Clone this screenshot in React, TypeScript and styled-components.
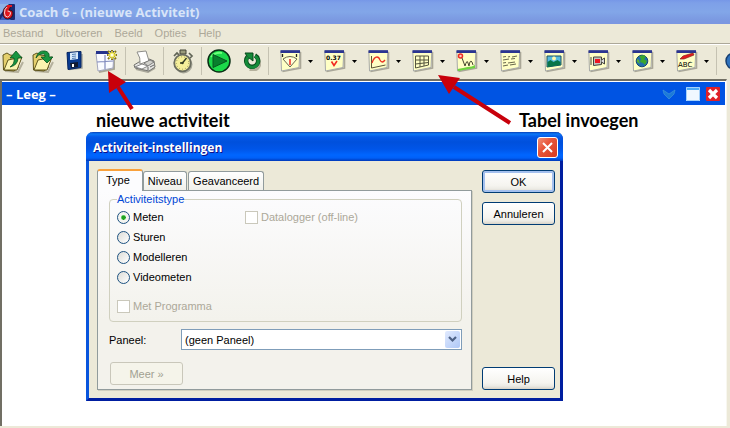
import React, { ReactNode, useState } from "react";
import styled, { createGlobalStyle, css } from "styled-components";

const Global = createGlobalStyle`
  * { box-sizing: border-box; }
  body { margin: 0; background: #ece9d8; font: 11px/14px "Liberation Sans", Arial, sans-serif; color: #000; }
  button, input, select { font: inherit; color: inherit; margin: 0; }
`;

const AppWindow = styled.div`
  position: relative;
  min-height: 100vh;
  display: flex;
  flex-direction: column;
  overflow: hidden;
`;

const TitleBar = styled.header`
  height: 24px;
  display: flex;
  align-items: center;
  gap: 4px;
  color: #d8e4f8;
  font: bold 13px/20px "Open Sans", sans-serif;
  background: linear-gradient(#7697e7 0, #7ea0e8 3px, #82a6e8 12px, #7b99e1 20px, #7b96e1);
  white-space: nowrap;
`;

const MenuBar = styled.nav`
  height: 20px;
  display: flex;
  align-items: center;
  gap: 12px;
  padding: 0 3px 2px;
  border-bottom: 1px solid #aca899;
`;

const MenuItem = styled.button`
  border: 0;
  padding: 0;
  background: none;
  color: #aca899;
`;

const ToolBar = styled.div`
  height: 35px;
  flex: none;
  display: flex;
  align-items: center;
  padding-bottom: 2px;
  border-top: 1px solid #fff;
  overflow: hidden;
`;

const ToolButton = styled.button<{ $w: number }>`
  flex: none;
  width: ${(p) => p.$w}px;
  height: 30px;
  padding: 0;
  border: 0;
  background: none;
  display: flex;
  align-items: center;
  justify-content: center;
`;

const ViewButton = styled.button`
  flex: none;
  width: 44px;
  height: 30px;
  padding: 0 0 0 4px;
  border: 0;
  background: none;
  display: flex;
  align-items: center;
  gap: 6px;
`;

const Divider = styled.span<{ $gap?: number }>`
  flex: none;
  width: 1px;
  height: 28px;
  margin-right: ${(p) => p.$gap ?? 0}px;
  background: #c5c2b2;
`;

const Workspace = styled.main`
  flex: 1;
  display: flex;
  flex-direction: column;
  margin: 0 3px 2px 0;
  border: solid #716f64;
  border-width: 2px 0 0 2px;
  border-right: 1px solid #f8f7f0;
  background: #fff;
`;

const DocumentBar = styled.div`
  height: 23px;
  margin: 1px 1px 0 0;
  padding: 0 5px 0 4px;
  display: flex;
  align-items: center;
  background: #0054e3;
  color: #fff;
  font: bold 13px/20px "Open Sans", sans-serif;
`;

const DocumentTitle = styled.span`
  flex: 1;
`;

const DocumentButton = styled.button<{ $gap: number }>`
  padding: 0;
  border: 0;
  background: none;
  margin-left: ${(p) => p.$gap}px;
  display: flex;
`;

const Note = styled.div<{ $x: number; $y: number }>`
  position: absolute;
  left: ${(p) => p.$x}px;
  top: ${(p) => p.$y}px;
  font: bold 18px/20px Lato, sans-serif;
  white-space: nowrap;
`;

const Pointers = styled.svg`
  position: absolute;
  left: 0;
  top: 0;
  pointer-events: none;
`;

const Dialog = styled.section`
  position: absolute;
  left: 86px;
  right: 167px;
  top: 132px;
  border: solid #0831d9;
  border-width: 0 3px 3px;
  border-color: #0831d9 #001ea0 #001ea0 #0855dd;
  border-radius: 7px 7px 0 0;
  background: #ece9d8;
`;

const DialogTitle = styled.header`
  height: 29px;
  margin: 0 -3px;
  padding: 2px 5px 0 7px;
  display: flex;
  align-items: center;
  justify-content: space-between;
  border-radius: 7px 7px 0 0;
  background: linear-gradient(#0840b8 0, #0c78f8 2px, #0458e8 5px, #0050dc 10px, #0055e8 17px, #0066ff 23px, #0060f8 26px, #0038b8);
  color: #fff;
  font: bold 12px/20px "Open Sans", sans-serif;
  text-shadow: 1px 1px #0f1089;
`;

const CloseButton = styled.button`
  width: 21px;
  height: 21px;
  padding: 0;
  border: 1px solid #fff;
  border-radius: 3px;
  background: linear-gradient(135deg, #f09078, #e8553a 40%, #d83a20);
  display: grid;
  place-items: center;
`;

const DialogBody = styled.div`
  display: flex;
  align-items: stretch;
  gap: 10px;
  padding: 8px 5px 8px 8px;
`;

const TabArea = styled.div`
  flex: 1;
`;

const TabList = styled.div`
  height: 21px;
  display: flex;
  align-items: flex-end;
  position: relative;
  z-index: 1;
`;

const Tab = styled.button<{ $on?: boolean }>`
  height: 19px;
  padding: 0 4px;
  margin-right: 1px;
  border: 1px solid #919b9c;
  border-bottom: 0;
  border-radius: 3px 3px 0 0;
  background: linear-gradient(#fff, #f0f0ea);
  white-space: nowrap;
  ${(p) =>
    p.$on &&
    css`
      height: 22px;
      padding: 0 12px 3px 8px;
      margin: 0 0 -1px;
      border-top: 2px solid #f9a13c;
      background: #fcfcfe;
    `}
`;

const TabPanel = styled.div`
  padding: 2px 9px 4px 11px;
  border: 1px solid #919b9c;
  box-shadow: 1px 1px #d0cebf;
  background: linear-gradient(#fcfcfe, #f3f2ec 65%, #f3f2ec);
`;

const Group = styled.fieldset`
  margin: 0;
  padding: 2px 7px 8px;
  border: 1px solid #d0d0bf;
  border-radius: 4px;
`;

const Legend = styled.legend`
  padding: 0;
  line-height: 12px;
  color: #0046d5;
`;

const Choices = styled.div`
  display: grid;
  grid-template-columns: 128px 1fr;
  grid-auto-rows: 20px;
  align-items: center;
`;

const Choice = styled.label<{ $off?: boolean }>`
  display: flex;
  align-items: center;
  gap: 3px;
  color: ${(p) => (p.$off ? "#aca899" : "#000")};
  white-space: nowrap;
`;

const ChoiceOnly = styled(Choice)`
  grid-column: 1;
`;

const LastChoice = styled(Choice)`
  margin-top: 12px;
`;

const Radio = styled.input`
  appearance: none;
  width: 13px;
  height: 13px;
  border: 1px solid #1c5180;
  border-radius: 50%;
  background: linear-gradient(135deg, #dcdcd7, #fff);
  &:checked {
    background: radial-gradient(circle, #21a121 0 2px, #58c858 2px, #f4f4f0 3px);
  }
`;

const Check = styled.input`
  appearance: none;
  width: 13px;
  height: 13px;
  border: 1px solid #cac8bb;
  background: #fff;
`;

const PanelRow = styled.div`
  display: flex;
  align-items: center;
  margin-top: 7px;
`;

const PanelLabel = styled.label`
  width: 72px;
`;

const SelectBox = styled.div`
  position: relative;
  flex: 1;
  display: flex;
`;

const Select = styled.select`
  appearance: none;
  width: 100%;
  height: 21px;
  padding: 0 20px 0 3px;
  border: 1px solid #7f9db9;
  border-radius: 0;
  background: #fff;
`;

const SelectArrow = styled.span`
  position: absolute;
  right: 2px;
  top: 2px;
  bottom: 2px;
  width: 15px;
  border-radius: 2px;
  background: linear-gradient(135deg, #e1eafe, #aec8f7);
  display: grid;
  place-items: center;
  pointer-events: none;
`;

const PushButton = styled.button<{ $main?: boolean }>`
  width: 73px;
  height: 23px;
  padding: 0;
  border: 1px solid #003c74;
  border-radius: 3px;
  background: linear-gradient(#fff, #f5f4ef 70%, #ecebe5 85%, #d8d3c8);
  box-shadow: ${(p) => (p.$main ? "inset 0 0 0 2px #a4c0ee" : "none")};
  &:disabled {
    border-color: #c9c7ba;
    background: #f5f4ea;
    color: #a1a192;
  }
`;

const MoreRow = styled.div`
  display: flex;
  margin: 12px 0 0 1px;
`;

const Actions = styled.div`
  display: flex;
  flex-direction: column;
  gap: 9px;
  padding-top: 1px;
`;

const Spacer = styled.div`
  flex: 1;
`;

const Logo = () => (
  <svg width="15" height="18" viewBox="0 0 15 18" aria-hidden="true">
    <rect y="1" width="15" height="16" rx="1" fill="#1b2a72" />
    <path d="M0 1h9L0 12z" fill="#8fb2e8" />
    <path d="M0 17l4-6 7 6z" fill="#3b5cb8" />
    <path d="M9 2q-6 2-6 8 0 6 5 6 5-1 5-6 0-3-4-3l2-4z" fill="#d8141c" stroke="#14101c" strokeWidth=".8" />
    <path d="M8 3q-4 3-3.500 7 0 4 3 4 3-1 3-4 0-2-3-2" fill="none" stroke="#f6dcdc" strokeWidth="1" />
    <path d="M7 3h5M8 9v4" stroke="#e9171f" strokeWidth="1.800" />
  </svg>
);

const Folder = ({ children }: { children: ReactNode }) => (
  <svg width="22" height="24" viewBox="0 0 22 24" aria-hidden="true">
    <path d="M3 22l13 1 5-10" fill="none" stroke="#b5b19d" strokeWidth="2" />
    <path d="M1.500 21L1 6l4-2 3 2 8 1v12l-4 3z" fill="#e4cf6c" stroke="#5f551d" />
    <path d="M2 21l4-10 14-3-5 13z" fill="#fbf4b0" stroke="#5f551d" />
    {children}
  </svg>
);

const OpenUp = () => (
  <Folder>
    <path d="M8 18q5-3 4-9H8l6-7 6 7h-4q0 7-8 9" fill="#189640" stroke="#07531f" strokeWidth=".8" />
  </Folder>
);

const OpenDown = () => (
  <Folder>
    <path d="M4 9q2-8 9-7 5 1 4 6h4l-6 6-6-6h4q0-4-3-3-4 0-6 4" fill="#189640" stroke="#07531f" strokeWidth=".8" />
  </Folder>
);

const Save = () => (
  <svg width="17" height="20" viewBox="0 0 17 20" aria-hidden="true">
    <path d="M3 18.500l13-1.500V3" fill="none" stroke="#aaa99e" strokeWidth="1.600" />
    <path d="M1 1.500l14-1v16l-13 2z" fill="#093b91" stroke="#06245f" />
    <path d="M4 2l8-1v7l-8 1z" fill="#d7e9fa" />
    <path d="M6 3.500l4-.5M6 5.500l4-.5M6 7.500l4-.5" stroke="#527fb5" />
    <path d="M4 12l8-1v5l-7 1z" fill="#111a31" />
    <path d="M6 13h2v3H6z" fill="#fff" />
  </svg>
);

const NewActivity = () => (
  <svg width="24" height="24" viewBox="0 0 24 24" aria-hidden="true">
    <path d="M4 23l15-3V6" fill="none" stroke="#a9a797" strokeWidth="2" />
    <path d="M1 4h18l-1 15-15 3z" fill="#fafbff" stroke="#a3a6bf" />
    <path d="M1 2h18v3H1z" fill="#25338c" />
    <path d="M10 6v14M2 13l16-1" stroke="#7f89bd" strokeWidth="1.200" />
    <path d="M17 1v10M12 6h10M13 2l8 8M21 2l-8 8" stroke="#83751c" strokeWidth="2" />
    <path d="M17 2v8M13 6h8M14 3l6 6M20 3l-6 6" stroke="#f7ed59" strokeWidth="1.300" />
    <circle cx="17" cy="6" r="1.500" fill="#fffee3" />
  </svg>
);

const Printer = () => (
  <svg width="23" height="24" viewBox="0 0 23 24" aria-hidden="true">
    <path d="M3 20l12 3 7-4" fill="none" stroke="#aaa89b" strokeWidth="2" />
    <path d="M1 16l5-3 10-3 5 2 1 6-6 4-14-3z" fill="#e4e4e2" stroke="#72726d" />
    <path d="M4 3l9-1 3 10-9 3q1-6-3-12" fill="#fff" stroke="#8e8e8a" />
    <path d="M11 14l6-3 4 2-6 4z" fill="#cfcfcb" stroke="#666" strokeWidth=".8" />
    <path d="M2 18l7-3 6 2-6 3z" fill="#fff" stroke="#888" />
    <path d="M15 18v3M17 18l4-2" stroke="#666" />
  </svg>
);

const Stopwatch = () => (
  <svg width="22" height="25" viewBox="0 0 22 25" aria-hidden="true">
    <circle cx="11.500" cy="15.500" r="9" fill="#aaa99b" />
    <path d="M8 1h6v4H8z" fill="#999a7b" stroke="#454538" />
    <path d="M2 7l3-3 2 2M17 4l3 3-2 2" fill="none" stroke="#5f6355" strokeWidth="1.700" />
    <circle cx="10.500" cy="14" r="8.300" fill="#f5ef9a" stroke="#6b6d60" strokeWidth="1.800" />
    <circle cx="10.500" cy="14" r="6.200" fill="none" stroke="#97915e" strokeDasharray="1 2" />
    <path d="M10.500 14l4-5M10.500 14H8" stroke="#303922" strokeWidth="1.300" />
    <circle cx="10.500" cy="14" r="1.200" fill="#343c24" />
  </svg>
);

const Play = () => (
  <svg width="24" height="24" viewBox="0 0 24 24" aria-hidden="true">
    <circle cx="12" cy="12" r="11" fill="#1bd94a" stroke="#092f14" strokeWidth="1.500" />
    <path d="M4 8q4-5 11-4" fill="none" stroke="#6aff78" strokeWidth="2" />
    <path d="M6 5.500L20 12 6 18.500z" fill="#087f2d" stroke="#07571f" />
  </svg>
);

const Restart = () => (
  <svg width="18" height="19" viewBox="0 0 18 19" aria-hidden="true">
    <path d="M13 5q4 4 1 8-3 4-8 2" fill="none" stroke="#b5b19d" strokeWidth="4" transform="translate(1 2)" />
    <path d="M12 3.500a6 6 0 1 1-7.500 1.500" fill="none" stroke="#07491c" strokeWidth="4.400" />
    <path d="M2 1h8v8L7.500 7 4.500 5z" fill="#148a39" stroke="#07491c" />
    <path d="M12 4a6 6 0 1 1-7 1" fill="none" stroke="#148a39" strokeWidth="3" />
  </svg>
);

const Page = ({ children }: { children: ReactNode }) => (
  <svg width="22" height="24" viewBox="0 0 22 24" aria-hidden="true">
    <path d="M2.500 22.500l18-3.500V3" fill="none" stroke="#aaa797" strokeWidth="1.600" />
    <path d="M.8 2h19l-.8 16.500L1.500 22z" fill="#ffffc5" stroke="#a7a9a8" />
    <path d="M.5 1.200h19.500v2.800H.5z" fill="#2b3590" />
    {children}
  </svg>
);

const views: { name: string; art: ReactNode }[] = [
  {
    name: "Meter",
    art: (
      <>
        <path d="M3 10q7-5 14 0l-7 8z" fill="#ffffd8" stroke="#66664d" />
        <path d="M2.500 5v3M16.500 5v3" stroke="#222" strokeWidth="1.300" />
        <path d="M10 10v6" stroke="#ef2b20" strokeWidth="1.500" />
      </>
    ),
  },
  {
    name: "Waarde",
    art: (
      <>
        <text x="2" y="10.500" fontFamily="DejaVu Sans, sans-serif" fontSize="6" fontWeight="bold">0.37</text>
        <path d="M7.500 12.500l2.500 4 3-4.500" fill="none" stroke="#f22a20" strokeWidth="1.600" />
      </>
    ),
  },
  {
    name: "Diagram",
    art: (
      <>
        <path d="M3.500 7v12l14-3" fill="none" stroke="#5e5638" />
        <path d="M4 14q2-6 5-6 2 0 3 3 2 4 5 0" fill="none" stroke="#ec3323" strokeWidth="1.300" />
      </>
    ),
  },
  {
    name: "Tabel",
    art: <path d="M3.500 7h13v9l-13 3zM3.500 11h13M3.500 15l13-1.500M8 7v11M12 7v10" fill="none" stroke="#55553e" />,
  },
  {
    name: "Model",
    art: (
      <>
        <path d="M1.500 20q6-1 10-2 5 0 7.500-2v3L2 22z" fill="#6fd43e" />
        <circle cx="4.500" cy="7" r="2" fill="#ffd0bd" stroke="#ee2a24" strokeWidth="1.500" />
        <path d="M6 9l3 8q2-7 3-3l1 3q1-7 3-4l1 3" fill="none" stroke="#45462d" />
      </>
    ),
  },
  {
    name: "Tekst",
    art: (
      <path
        d="M3 8l3-.5M8 8l2-.5M12 8l5-1M3 11l6-1M11 10l4-.5M3 14l3-.5M8 14l7-1M3 17l5-1M10 16l6-1"
        stroke="#6a694d"
        strokeWidth="1.100"
      />
    ),
  },
  {
    name: "Afbeelding",
    art: (
      <>
        <path d="M3 7h14v9L3 18z" fill="#55b9df" stroke="#205161" />
        <circle cx="10" cy="9.500" r="2" fill="#fff8ae" />
        <path d="M3.500 13l3-2 3 2 4-2 3 2v3l-13 2z" fill="#087549" />
      </>
    ),
  },
  {
    name: "Video",
    art: (
      <>
        <path d="M5.500 8h8v7.500l-8 1z" fill="#c4c5bd" stroke="#44443e" />
        <path d="M13.500 11l3-2v6l-3-2M3 8v8" fill="#ddd" stroke="#44443e" />
        <path d="M7 10h5v4H7z" fill="#ed1720" />
      </>
    ),
  },
  {
    name: "Web",
    art: (
      <>
        <circle cx="10" cy="12" r="5.800" fill="#216dad" stroke="#164973" />
        <path d="M7 7l5-1 2 2-2 2 3 2-2 4-2-2-3-1 1-3z" fill="#3ba62d" />
        <path d="M5 10l2 1 1 4-3-2z" fill="#55b03b" />
      </>
    ),
  },
  {
    name: "Annotatie",
    art: (
      <>
        <path d="M4 10l3-3 10-3 1 2-10 4z" fill="#e51b1c" stroke="#83241d" strokeWidth=".7" />
        <text x="2" y="17.500" fontFamily="DejaVu Sans, sans-serif" fontSize="7">ABC</text>
      </>
    ),
  },
];

const DropArrow = () => (
  <svg width="5" height="3" viewBox="0 0 5 3" aria-hidden="true">
    <path d="M0 0h5L2.500 3z" />
  </svg>
);

const modes = ["Meten", "Sturen", "Modelleren", "Videometen"];

function SettingsDialog() {
  const [mode, setMode] = useState("Meten");
  return (
    <Dialog role="dialog" aria-labelledby="dialog-title">
      <DialogTitle>
        <span id="dialog-title">Activiteit-instellingen</span>
        <CloseButton aria-label="Sluiten">
          <svg width="13" height="13" viewBox="0 0 13 13" aria-hidden="true">
            <path d="M2 2l9 9M11 2l-9 9" stroke="#fff" strokeWidth="2" />
          </svg>
        </CloseButton>
      </DialogTitle>
      <DialogBody>
        <TabArea>
          <TabList role="tablist">
            <Tab role="tab" aria-selected="true" $on>Type</Tab>
            <Tab role="tab" aria-selected="false">Niveau</Tab>
            <Tab role="tab" aria-selected="false">Geavanceerd</Tab>
          </TabList>
          <TabPanel role="tabpanel">
            <Group>
              <Legend>Activiteitstype</Legend>
              <Choices>
                {modes.map((m, i) => (
                  <React.Fragment key={m}>
                    <ChoiceOnly>
                      <Radio type="radio" name="mode" checked={mode === m} onChange={() => setMode(m)} />
                      {m}
                    </ChoiceOnly>
                    {i === 0 && (
                      <Choice $off>
                        <Check type="checkbox" disabled />
                        Datalogger (off-line)
                      </Choice>
                    )}
                  </React.Fragment>
                ))}
              </Choices>
              <LastChoice $off>
                <Check type="checkbox" disabled />
                Met Programma
              </LastChoice>
            </Group>
            <PanelRow>
              <PanelLabel htmlFor="panel">Paneel:</PanelLabel>
              <SelectBox>
                <Select id="panel">
                  <option>(geen Paneel)</option>
                </Select>
                <SelectArrow>
                  <svg width="9" height="7" viewBox="0 0 9 7" aria-hidden="true">
                    <path d="M1 1l3.500 3.500L8 1" fill="none" stroke="#4d6185" strokeWidth="2.200" />
                  </svg>
                </SelectArrow>
              </SelectBox>
            </PanelRow>
            <MoreRow>
              <PushButton disabled>Meer »</PushButton>
            </MoreRow>
          </TabPanel>
        </TabArea>
        <Actions>
          <PushButton $main>OK</PushButton>
          <PushButton>Annuleren</PushButton>
          <Spacer />
          <PushButton>Help</PushButton>
        </Actions>
      </DialogBody>
    </Dialog>
  );
}

export default function App() {
  return (
    <AppWindow>
      <Global />
      <TitleBar>
        <Logo />
        <span>Coach 6 - (nieuwe Activiteit)</span>
      </TitleBar>
      <MenuBar>
        {["Bestand", "Uitvoeren", "Beeld", "Opties", "Help"].map((m) => (
          <MenuItem key={m}>{m}</MenuItem>
        ))}
      </MenuBar>
      <ToolBar>
        <ToolButton $w={26} aria-label="Openen"><OpenUp /></ToolButton>
        <ToolButton $w={34} aria-label="Importeren"><OpenDown /></ToolButton>
        <ToolButton $w={28} aria-label="Opslaan"><Save /></ToolButton>
        <ToolButton $w={37} aria-label="Nieuwe activiteit"><NewActivity /></ToolButton>
        <Divider />
        <ToolButton $w={37} aria-label="Afdrukken"><Printer /></ToolButton>
        <Divider />
        <ToolButton $w={37} aria-label="Tijd"><Stopwatch /></ToolButton>
        <Divider />
        <ToolButton $w={34} aria-label="Start"><Play /></ToolButton>
        <ToolButton $w={32} aria-label="Herhalen"><Restart /></ToolButton>
        <Divider $gap={7} />
        {views.map((v) => (
          <ViewButton key={v.name} aria-label={v.name}>
            <Page>{v.art}</Page>
            <DropArrow />
          </ViewButton>
        ))}
        <Divider $gap={8} />
        <ToolButton $w={18} aria-label="Info">
          <svg width="18" height="18" viewBox="0 0 18 18" aria-hidden="true">
            <circle cx="9" cy="9" r="8" fill="#2f72bd" stroke="#173f70" strokeWidth="1.500" />
          </svg>
        </ToolButton>
      </ToolBar>
      <Workspace>
        <DocumentBar>
          <DocumentTitle>– Leeg –</DocumentTitle>
          <DocumentButton $gap={0} aria-label="Minimaliseren">
            <svg width="14" height="12" viewBox="0 0 14 12" aria-hidden="true">
              <path d="M1 2l6 4 6-4-1 4-5 5-5-5z" fill="#1c7ad8" stroke="#3f95d8" strokeWidth=".7" />
            </svg>
          </DocumentButton>
          <DocumentButton $gap={10} aria-label="Maximaliseren">
            <svg width="14" height="14" viewBox="0 0 14 14" aria-hidden="true">
              <path d="M0 0h14v14H0z" fill="#f0f8ff" />
              <path d="M0 0h14v3H0z" fill="#4daaf5" />
              <path d="M.5.5h13v13H.5z" fill="none" stroke="#a5d1fa" />
            </svg>
          </DocumentButton>
          <DocumentButton $gap={6} aria-label="Document sluiten">
            <svg width="14" height="14" viewBox="0 0 14 14" aria-hidden="true">
              <rect width="14" height="14" rx="1" fill="#df2028" />
              <path d="M3 3l8 8M11 3l-8 8" stroke="#fff" strokeWidth="3.200" />
            </svg>
          </DocumentButton>
        </DocumentBar>
      </Workspace>
      <SettingsDialog />
      <Note $x={96} $y={110}>nieuwe activiteit</Note>
      <Note $x={519} $y={110}>Tabel invoegen</Note>
      <Pointers width="730" height="132" viewBox="0 0 730 132" aria-hidden="true">
        <path d="M132 109L118 87M510 123L454 87" stroke="#c8000b" strokeWidth="4" />
        <path d="M108 71l1 22 17-11zM438 75l11 19 11-16z" fill="#c8000b" />
      </Pointers>
    </AppWindow>
  );
}
